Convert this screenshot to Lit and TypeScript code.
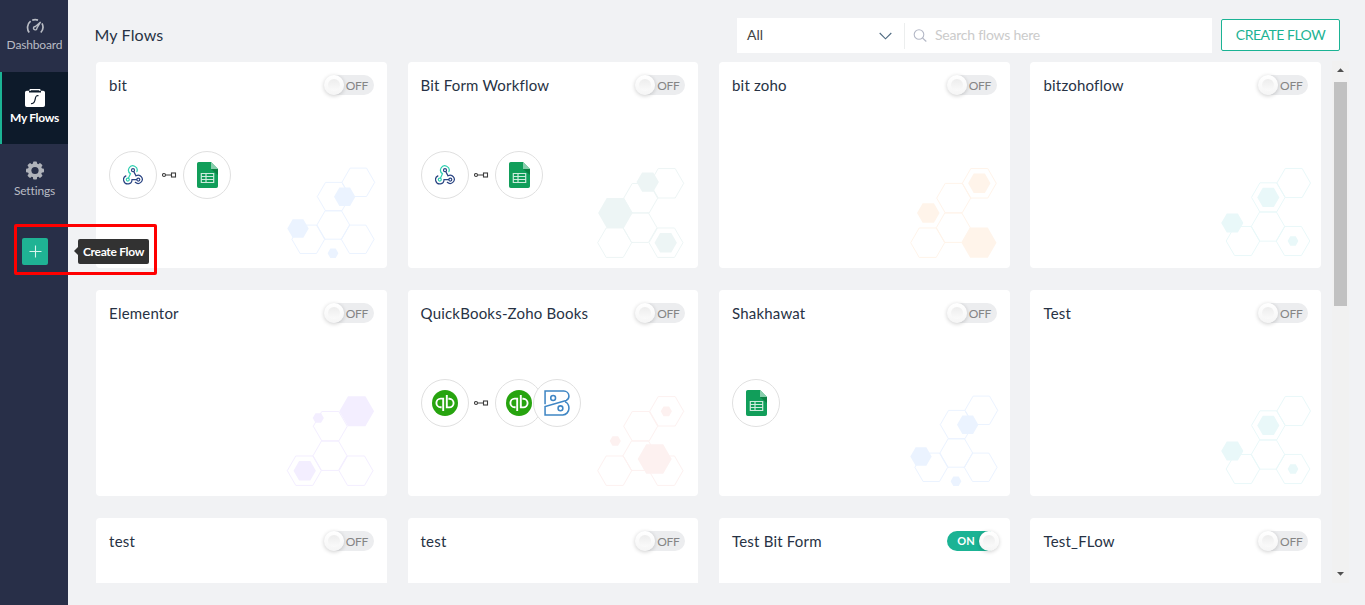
import { LitElement, html, svg, css, nothing } from "lit";
import { customElement, property } from "lit/decorators.js";

type Hex = [number, number, number];
interface Pattern {
  color: string;
  outline: Hex[];
  filled: Hex[];
}
interface Flow {
  name: string;
  on?: boolean;
  trigger?: string;
  actions?: string[];
  pattern: string;
}

const PATTERNS: Record<string, Pattern> = {
  blue: {
    color: "#ebf3ff",
    outline: [[262.3, 120.3, 16.4], [237.7, 134.6, 16.4], [237.3, 163, 16.4], [212.3, 177.3, 16.4], [261.7, 177.3, 16.4]],
    filled: [[248.7, 134.7, 10.7], [202, 166.4, 10.7], [237, 191.3, 5.4]],
  },
  green: {
    color: "#edf5f5",
    outline: [[259.7, 121.3, 17], [233.7, 136.2, 17], [233, 165.7, 17], [207.7, 180.7, 17], [259, 180.7, 17]],
    filled: [[240.7, 120.1, 11.2], [208.3, 151, 17.2], [258.7, 180.7, 11.2]],
  },
  orange: {
    color: "#fff4ea",
    outline: [[260.3, 121.3, 17], [234.7, 136.1, 17], [234.3, 165.7, 17], [208.7, 180.7, 17]],
    filled: [[260.3, 121.3, 11.2], [260, 180.7, 17.5], [209.3, 151, 11.3]],
  },
  cyan: {
    color: "#e9f8f9",
    outline: [[263.7, 121, 16.8], [238.3, 135.4, 16.8], [238, 164.6, 16.8], [213, 179, 16.8], [263, 179, 16.8]],
    filled: [[238.3, 135.4, 11.1], [202.3, 161, 11.1], [263, 179, 5.4]],
  },
  purple: {
    color: "#f3eeff",
    outline: [[234.3, 136.2, 17], [234, 165.7, 17], [208.3, 180.7, 17], [260, 180.7, 17]],
    filled: [[260.7, 121.3, 17.4], [208.7, 180.7, 11.2], [222.3, 128, 5.6]],
  },
  pink: {
    color: "#fdf1f0",
    outline: [[259.7, 121.3, 17], [233.7, 136.2, 17], [233, 165.7, 17], [207.7, 180.7, 17], [259, 180.7, 17]],
    filled: [[259.3, 121.3, 5.6], [247.7, 169, 17], [208.3, 151, 5.6]],
  },
};

const FLOWS: Flow[] = [
  { name: "bit", trigger: "webhook", actions: ["sheets"], pattern: "blue" },
  { name: "Bit Form Workflow", trigger: "webhook", actions: ["sheets"], pattern: "green" },
  { name: "bit zoho", pattern: "orange" },
  { name: "bitzohoflow", pattern: "cyan" },
  { name: "Elementor", pattern: "purple" },
  { name: "QuickBooks-Zoho Books", trigger: "quickbooks", actions: ["quickbooks", "books"], pattern: "pink" },
  { name: "Shakhawat", trigger: "sheets", pattern: "blue" },
  { name: "Test", pattern: "cyan" },
  { name: "test", pattern: "green" },
  { name: "test", pattern: "orange" },
  { name: "Test Bit Form", on: true, pattern: "purple" },
  { name: "Test_FLow", pattern: "pink" },
];

const hexPoints = ([x, y, r]: Hex) => {
  const h = (r * Math.sqrt(3)) / 2;
  return [[-r, 0], [-r / 2, -h], [r / 2, -h], [r, 0], [r / 2, h], [-r / 2, h]]
    .map(([dx, dy]) => `${(x + dx).toFixed(2)},${(y + dy).toFixed(2)}`)
    .join(" ");
};

const APP_ICONS: Record<string, unknown> = {
  webhook: html`<svg width="20" height="20" viewBox="0 0 20 20" fill="none" stroke-width="1.200" stroke-linecap="round">
    <g stroke="#2b4583">
      <circle cx="10" cy="5.200" r="1.500" />
      <path d="M10.800 6.600L13 10.800A4.100 4.100 0 1 1 12.300 17.300" />
      <circle cx="15.300" cy="14.600" r="1.500" />
      <path d="M13.700 14.600H9A4.200 4.200 0 1 1 2.900 10.900" />
    </g>
    <g stroke="#2fcfb0">
      <path d="M13.900 6.600A4.300 4.300 0 1 0 7.500 8.700L5.500 13" />
      <circle cx="4.800" cy="14.600" r="1.500" />
    </g>
  </svg>`,
  sheets: html`<svg class="bleed" width="20" height="26" viewBox="0 0 20 26">
    <path d="M1.800 0H14L21 7V24.200a1.800 1.800 0 0 1-1.800 1.800H1.800A1.800 1.800 0 0 1 0 24.200V1.800A1.800 1.800 0 0 1 1.800 0z" fill="#119e5a" />
    <path d="M14 7l7 6V7z" fill="#0b8043" />
    <path d="M14 0l7 7H14z" fill="#87ceac" />
    <path d="M4.300 11.500H16.700V20.500H4.300zM4.300 14.500H16.700M4.300 17.500H16.700M9 11.500v9" fill="none" stroke="#cdebdc" stroke-width="1.200" />
  </svg>`,
  quickbooks: html`<svg width="26" height="26" viewBox="0 0 26 26">
    <circle cx="13" cy="13" r="13" fill="#27a40f" />
    <g fill="none" stroke="#fff" stroke-width="1.900">
      <path d="M11.200 21V8.600H8.700a4.300 4.300 0 0 0 0 8.600h.9" />
      <path d="M14.800 5V17.400h2.500a4.300 4.300 0 0 0 0-8.600h-.9" />
    </g>
  </svg>`,
  books: html`<svg width="26" height="26" viewBox="0 0 27 27" fill="none" stroke="#3f86c4" stroke-width="1.600">
    <path d="M1.100 14.700V1.100H20.500a5.500 5.500 0 0 1 5.400 5.200c0 2.200-.9 3.800-2.900 4.500L1.100 17.200V25.900H19.500a6.800 6.800 0 0 0 6.400-6.900c0-3.300-1.500-5.700-4-6.700" />
    <circle cx="9.500" cy="8.300" r="2.500" />
    <circle cx="17.100" cy="19" r="2.500" />
  </svg>`,
};

@customElement("flow-toggle")
class FlowToggle extends LitElement {
  @property({ type: Boolean }) on = false;
  static styles = css`
    :host { display: block; flex: none; }
    .track {
      display: flex; align-items: center; box-sizing: border-box;
      width: 50px; height: 20px; border-radius: 10px;
      background: #ecedef; color: #858585; font-size: 12px; line-height: 20px; letter-spacing: -0.3px;
    }
    .track.on { background: #1bb394; color: #fff; font-weight: 700; font-size: 11px; justify-content: flex-end; letter-spacing: 0; }
    .knob {
      display: grid; place-items: center; flex: none;
      width: 20px; height: 20px; border-radius: 50%;
      background: linear-gradient(#ffffff, #f5f5f5);
      box-shadow: 0 1px 4px rgba(0, 0, 0, 0.2);
    }
    .dot { width: 12px; height: 12px; border-radius: 50%; background: linear-gradient(#ededed, #fafafa); }
    .label { margin-left: 2px; padding-top: 1px; }
    .on .knob { margin-right: -2px; }
    .on .label { margin: 0 4px 0 0; padding: 0; }
  `;
  render() {
    const knob = html`<span class="knob"><span class="dot"></span></span>`;
    return this.on
      ? html`<div class="track on"><span class="label">ON</span>${knob}</div>`
      : html`<div class="track">${knob}<span class="label">OFF</span></div>`;
  }
}

@customElement("flow-card")
class FlowCard extends LitElement {
  @property({ attribute: false }) flow!: Flow;
  static styles = css`
    :host { display: block; min-width: 0; }
    .card {
      position: relative; box-sizing: border-box; height: 206px; padding: 13px;
      border-radius: 4px; background: #fff; overflow: hidden;
    }
    .pattern { position: absolute; right: 0; top: 0; }
    .head { position: relative; display: flex; justify-content: space-between; align-items: center; height: 20px; }
    .name { font-size: 15px; line-height: 20px; color: #273244; white-space: nowrap; letter-spacing: 0.2px; }
    .apps { position: relative; display: flex; align-items: center; margin-top: 56px; }
    .app {
      display: grid; place-items: center; box-sizing: border-box; flex: none;
      width: 48px; height: 48px; border: 1px solid #e0e0e0; border-radius: 50%; background: #fff;
    }
    .app.stacked { margin-left: -10px; }
    .link { margin: 0 6px 0 5px; flex: none; }
    .bleed { overflow: visible; }
    svg { display: block; }
  `;
  render() {
    const f = this.flow;
    const p = PATTERNS[f.pattern];
    return html`<div class="card">
      <svg class="pattern" width="291" height="206" viewBox="0 0 291 206">
        ${p.outline.map((h) => svg`<polygon points=${hexPoints(h)} fill="none" stroke=${p.color} stroke-width="1" />`)}
        ${p.filled.map((h) => svg`<polygon points=${hexPoints(h)} fill=${p.color} />`)}
      </svg>
      <div class="head"><span class="name">${f.name}</span><flow-toggle ?on=${!!f.on}></flow-toggle></div>
      ${f.trigger
        ? html`<div class="apps">
            <span class="app">${APP_ICONS[f.trigger]}</span>
            ${f.actions
              ? html`<svg class="link" width="15" height="8" viewBox="0.500 0 15 8" fill="none" stroke="#3c3c3c" stroke-width="1.100">
                    <circle cx="2.500" cy="4" r="1.500" /><path d="M4 4H10" /><rect x="10" y="2" width="4" height="4" />
                  </svg>
                  ${f.actions.map((a, i) => html`<span class="app ${i ? "stacked" : ""}">${APP_ICONS[a]}</span>`)}`
              : nothing}
          </div>`
        : nothing}
    </div>`;
  }
}

@customElement("side-nav")
class SideNav extends LitElement {
  static styles = css`
    :host { display: block; flex: none; width: 68px; background: #282f48; }
    nav { display: flex; flex-direction: column; align-items: stretch; }
    .item {
      display: flex; flex-direction: column; align-items: center; box-sizing: border-box;
      height: 72px; padding-top: 16px; padding-left: 1px;
      color: #b9bcc4; font-size: 12px; line-height: 16px; letter-spacing: -0.150px; white-space: nowrap;
    }
    .item svg { display: block; margin-bottom: 1px; }
    .item.active { border-left: 2px solid #1bb394; padding-left: 0; padding-right: 1px; background: #0d1a2a; color: #fff; font-weight: 700; letter-spacing: -0.300px; }
    .active svg { margin: 0 0 2px 1px; }
    .create { display: flex; align-items: center; margin: 22px 0 0 22px; position: relative; }
    .plus { display: grid; place-items: center; width: 26px; height: 27px; border-radius: 2px; background: #1fb394; }
    .tip {
      position: absolute; left: 56px; top: 1px; box-sizing: border-box; width: 71px; height: 25px; border-radius: 2px;
      background: #323232; color: #fff; font-weight: 700; font-size: 12px; line-height: 26px; text-align: center;
      white-space: nowrap; letter-spacing: -0.300px; z-index: 2;
    }
    .tip::before {
      content: ""; position: absolute; left: -4px; top: 8px;
      border: 4px solid transparent; border-left-width: 0; border-right-color: #323232;
    }
    .marker {
      position: absolute; left: -8px; top: -14px; box-sizing: border-box; width: 143px; height: 51px;
      border: 3px solid #ff0000; border-radius: 2px; z-index: 3;
    }
  `;
  render() {
    return html`<nav>
      <div class="item">
        <svg width="20" height="20" viewBox="0 0 20 20" fill="none" stroke="#b9bcc4" stroke-width="1.700">
          <path d="M4.200 16.500A8.200 8.200 0 0 1 5.600 5.200M7.200 4.200A8.200 8.200 0 0 1 13 4.100M17 7.300A8.200 8.200 0 0 1 15.800 16.500" />
          <path d="M15.600 6L10.400 10.500A1.700 1.700 0 1 0 11.900 12.200z" stroke-width="1.400" />
        </svg>
        <span>Dashboard</span>
      </div>
      <div class="item active">
        <svg width="20" height="20" viewBox="0 0 20 20">
          <path d="M4.500 3V1.800A.8.800 0 0 1 5.300 1H14.700a.8.800 0 0 1 .8.800V3H14.300V2.200H5.700V3z" fill="#fff" />
          <path d="M1.800 2.800H4v1.700H16V2.800H18.200A1.800 1.800 0 0 1 20 4.600V17.200A1.800 1.800 0 0 1 18.200 19H1.800A1.800 1.800 0 0 1 0 17.200V4.600A1.800 1.800 0 0 1 1.800 2.800z" fill="#fff" />
          <path d="M13 7.600C11 7.400 10.700 8.400 10.200 11.200S9.300 15.800 6.500 15.600" fill="none" stroke="#0d1a2a" stroke-width="1.200" stroke-linecap="round" />
        </svg>
        <span>My Flows</span>
      </div>
      <div class="item">
        <svg width="20" height="22" viewBox="0 0 20 21">
          <g fill="#b0b3ba">
            ${[0, 45, 90, 135].map((a) => svg`<rect x="8" y="1" width="4" height="18" rx="1" transform="rotate(${a} 10 10)" />`)}
            <circle cx="10" cy="10" r="7.200" />
          </g>
          <circle cx="10" cy="10" r="3.600" fill="#282f48" />
        </svg>
        <span>Settings</span>
      </div>
      <div class="create">
        <span class="plus">
          <svg width="13" height="13" viewBox="0 0 13 13" stroke="#d9f5ee" stroke-width="1.100"><path d="M6.500 0.500V12.500M0.500 6.500H12.500" /></svg>
        </span>
        <span class="tip">Create Flow</span>
        <span class="marker"></span>
      </div>
    </nav>`;
  }
}

@customElement("app-root")
class AppRoot extends LitElement {
  static styles = css`
    :host {
      display: flex; width: 100%; height: 605px; overflow: hidden; background: #f1f2f4;
      font-family: Lato, "Open Sans", sans-serif; color: #273244;
    }
    main { flex: 1; min-width: 0; display: flex; flex-direction: column; }
    header { display: flex; align-items: center; flex: none; height: 35px; padding: 18px 25px 0 26.500px; }
    h1 { flex: 1; margin: 0; padding-bottom: 2px; font-size: 16px; line-height: 20px; font-weight: 400; letter-spacing: 0.150px; }
    .filter { display: flex; align-items: center; width: 475px; height: 35px; background: #fff; }
    .select { display: flex; align-items: center; justify-content: space-between; box-sizing: border-box; width: 167px; padding: 0 12px 0 10px; font-size: 14px; color: #444; }
    .select span { padding-bottom: 2px; }
    .search { display: flex; align-items: center; flex: 1; height: 26px; border-left: 1px solid #eceeee; padding-left: 8px; font-size: 14px; color: #cbcbcb; letter-spacing: -0.230px; }
    .search svg { margin-right: 7px; }
    .search span { padding-bottom: 3px; }
    .new {
      box-sizing: border-box; width: 119px; height: 32px; margin-left: 9px; border: 1px solid #1bb394; border-radius: 2px; position: relative; top: -1px;
      background: #fff; color: #1bb394; font-size: 14px; line-height: 30px; text-align: center; white-space: nowrap; letter-spacing: -0.500px;
    }
    .body { display: flex; height: 522px; margin-top: 8px; }
    .viewport { width: 1225px; padding: 1px 0 0 28.100px; overflow: hidden; box-sizing: content-box; height: 521px; }
    .grid { display: grid; grid-template-columns: repeat(4, 1fr); column-gap: 20.800px; row-gap: 22px; }
    .scroll { display: flex; flex-direction: column; align-items: center; width: 17px; margin-left: 10.900px; background: #f1f1f1; }
    .thumb { width: 13px; height: 224px; margin-top: 4px; background: #c1c1c1; }
    .scroll svg { display: block; height: 17px; }
    .fill { flex: 1; }
  `;
  render() {
    return html`<side-nav></side-nav>
      <main>
        <header>
          <h1>My Flows</h1>
          <div class="filter">
            <div class="select">
              <span>All</span>
              <svg width="13" height="8" viewBox="0 0 13 8" fill="none" stroke="#4e6a80" stroke-width="1.100"><path d="M0.700 1L6.500 6.800L12.300 1" /></svg>
            </div>
            <div class="search">
              <svg width="15" height="14" viewBox="0 0 15 14" fill="none" stroke="#b4b8c6" stroke-width="1.100">
                <circle cx="6" cy="5.500" r="4.800" /><path d="M9.500 9L13.300 12.500" />
              </svg>
              <span>Search flows here</span>
            </div>
          </div>
          <div class="new">CREATE FLOW</div>
        </header>
        <div class="body">
          <div class="viewport">
            <div class="grid">${FLOWS.map((f) => html`<flow-card .flow=${f}></flow-card>`)}</div>
          </div>
          <div class="scroll">
            <svg width="17" height="17" viewBox="0 0 17 17"><path d="M5 11L8.500 7.300L12 11z" fill="#505050" /></svg>
            <div class="thumb"></div>
            <div class="fill"></div>
            <svg width="17" height="17" viewBox="0 0 17 17"><path d="M5 6L8.500 9.700L12 6z" fill="#505050" /></svg>
          </div>
        </div>
      </main>`;
  }
}
